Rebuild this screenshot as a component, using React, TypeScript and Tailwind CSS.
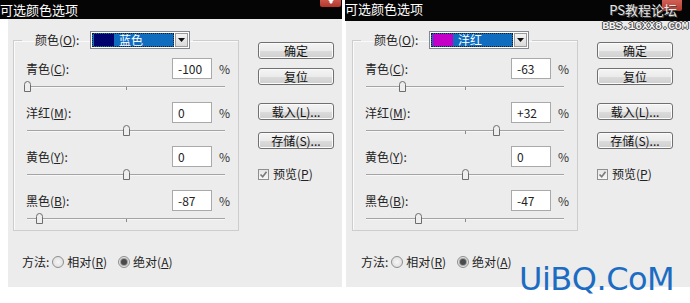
import React from 'react';

const cjk = "font-['Noto_Sans_CJK_SC','Noto_Sans',sans-serif]";

interface RowProps {
  name: string;
  hot: string;
  value: number;
  last?: boolean;
}

function Thumb() {
  return <svg width="9" height="11" viewBox="0 0 9 11">
      <path d="M1.5 10.5 V3.5 Q1.5 0.5 4.5 0.5 Q7.5 0.5 7.5 3.5 V10.5 Z" fill="#eeeeee" stroke="#6d6d6d" />
    </svg>;
}

function SliderRow({ name, hot, value, last }: RowProps) {
  const shown = value > 0 ? `+${value}` : `${value}`;
  return <div className={last ? '' : 'mb-[7px]'}>
      <div className="flex items-center h-[21px]">
        <span className="w-[146px] text-[12px] text-[#222]">
          {name}(<span className="underline">{hot}</span>):
        </span>
        <div className="w-[40px] h-[21px] border border-[#a9a9a9] bg-white pl-[5px] flex items-center text-[12px] text-[#222]">
          {shown}
        </div>
        <span className="ml-[7px] text-[12px] text-[#333]">%</span>
      </div>
      <div className="relative ml-[1px] w-[198px] h-[16px] pt-[7px]">
        <div className="h-px bg-[#a4a4a4]" />
        <div className="h-px bg-[#f7f7f7]" />
        <div className="absolute left-[99px] top-[8px] w-px h-[3px] bg-[#8a8a8a]" />
        <div className="absolute top-[2px] leading-none" style={{ left: (value + 100) / 200 * 198 - 4.5 }}>
          <Thumb />
        </div>
      </div>
    </div>;
}

function Btn({ children, className = '' }: { children: React.ReactNode; className?: string }) {
  return <div className={`w-[76px] h-[17px] rounded-[3px] border border-[#707070] bg-[linear-gradient(#f4f4f4,#ebebeb_50%,#dcdcdc_51%,#cfcfcf)] flex items-center justify-center text-[12px] text-[#111] shadow-[inset_0_0_0_1px_#fbfbfb] ${className}`}>
      {children}
    </div>;
}

function Radio({ checked }: { checked?: boolean }) {
  return <span className="w-[12px] h-[12px] rounded-full border border-[#8e8f8f] bg-[radial-gradient(circle,#f6f6f6,#d8d8d8)] flex items-center justify-center">
      {checked && <span className="w-[6px] h-[6px] rounded-full bg-[#4a4a4a] shadow-[0_0_0_1px_#a0a0a0]" />}
    </span>;
}

interface DialogProps {
  swatch: string;
  colorName: string;
  rows: RowProps[];
  wide?: boolean;
}

function Dialog({ swatch, colorName, rows, wide }: DialogProps) {
  return <div className={`${wide ? 'w-[345px]' : 'w-[342px]'} flex flex-col`}>
      <div className={`${wide ? 'h-[21px] pb-[3px]' : 'h-[19px]'} bg-[#050505] flex items-center text-[13px] text-white`}>
        可选颜色选项
      </div>
      <div className={`${wide ? 'ml-[1px] pl-[6px] h-[266px] pt-[10px]' : 'ml-[8px] pl-[5px] h-[268px] pt-[12px]'} bg-[#ececec] flex items-start`}>
        <div className="flex flex-col">
          <fieldset className="w-[226px] min-w-0 border border-[#cdcdcd] shadow-[inset_1px_1px_0_#fafafa] p-0 m-0">
            <legend className="ml-[8px] pl-[13px] pr-[3px] flex items-center h-[18px]">
              <span className="text-[12px] text-[#222] w-[55px]">
                颜色(<span className="underline">O</span>):
              </span>
              <div className="w-[100px] h-[18px] border border-[#828790] bg-white flex p-[1px]">
                <div className="flex-1 bg-[#0f6cbf] border border-dotted border-[#1c1c1c] flex items-center pl-[1px]">
                  <span className="w-[20px] h-[12px]" style={{ background: swatch }} />
                  <span className="ml-[5px] text-[12px] text-white">{colorName}</span>
                </div>
                <div className="w-[13px] ml-[1px] bg-[linear-gradient(#f3f3f3,#dadada)] border border-[#9a9a9a] flex items-center justify-center">
                  <svg width="7" height="4" viewBox="0 0 7 4"><path d="M0 0 H7 L3.5 4 Z" fill="#111" /></svg>
                </div>
              </div>
            </legend>
            <div className="pl-[12px] pt-[9px] pb-[3px]">
              {rows.map((r, i) => <SliderRow key={r.name} {...r} last={i === rows.length - 1} />)}
            </div>
          </fieldset>
          <div className="mt-[23px] ml-[9px] flex items-center h-[16px] text-[12px] text-[#222]">
            <span>方法:</span>
            <span className="ml-[3px]"><Radio /></span>
            <span className="ml-[3px]">相对(<span className="underline">R</span>)</span>
            <span className="ml-[11px]"><Radio checked /></span>
            <span className="ml-[3px]">绝对(<span className="underline">A</span>)</span>
          </div>
        </div>
        <div className="ml-[19px] mt-[11px] flex flex-col">
          <Btn>确定</Btn>
          <Btn className="mt-[9px]">复位</Btn>
          <Btn className="mt-[18px]">载入(L)...</Btn>
          <Btn className="mt-[12px]">存储(S)...</Btn>
          <div className="mt-[16px] flex items-center text-[12px] text-[#222]">
            <span className="w-[11px] h-[11px] border border-[#8e8f8f] bg-[linear-gradient(#e6e6e6,#f8f8f8)] flex items-center justify-center">
              <svg width="9" height="9" viewBox="0 0 9 9"><path d="M1.5 4.5 L3.7 6.8 L7.5 1.8" fill="none" stroke="#7a7a7a" strokeWidth="1.6" /></svg>
            </span>
            <span className="ml-[4px]">预览(<span className="underline">P</span>)</span>
          </div>
        </div>
      </div>
    </div>;
}

export default function App() {
  return <div className={`relative w-[690px] h-[303px] bg-white overflow-hidden ${cjk}`}>
      <div className="flex gap-[3px]">
        <Dialog swatch="#02046e" colorName="蓝色" rows={[{ name: '青色', hot: 'C', value: -100 }, { name: '洋红', hot: 'M', value: 0 }, { name: '黄色', hot: 'Y', value: 0 }, { name: '黑色', hot: 'B', value: -87 }]} />
        <Dialog wide swatch="#c400c8" colorName="洋红" rows={[{ name: '青色', hot: 'C', value: -63 }, { name: '洋红', hot: 'M', value: 32 }, { name: '黄色', hot: 'Y', value: 0 }, { name: '黑色', hot: 'B', value: -47 }]} />
      </div>

      {/* close buttons, cut off by the crop */}
      <div className="absolute left-[320px] top-0 w-[21px] h-[7px] bg-[linear-gradient(#c9584a,#b5342a)] rounded-b-[2px] flex justify-center overflow-hidden">
        <svg width="10" height="7" viewBox="0 0 10 7"><path d="M1 -3 L6 3 M9 -3 L4 3" stroke="#fff" strokeWidth="2" /></svg>
      </div>
      <div className="absolute left-[662px] top-0 w-[20px] h-[11px] bg-[linear-gradient(#d06055,#b33a2e)] rounded-b-[2px]" />

      {/* forum watermark */}
      <div className="absolute right-[13px] top-[2px] text-[13px] leading-[15px] text-[#e6e6e6] [text-shadow:1px_1px_0_#4a4a4a]">
        PS教程论坛
      </div>
      <div className="absolute right-[2px] top-[20px] font-['Liberation_Mono',monospace] text-[11.5px] leading-[11px] font-bold text-[#f2f2f2] tracking-[-0.3px] [text-shadow:1px_0_0_#444,-1px_0_0_#444,0_1px_0_#444,0_-1px_0_#444]">
        BBS.16XX8.COM
      </div>

      <div className="absolute left-[519px] top-[259px] font-['DejaVu_Sans',sans-serif] text-[32px] leading-[40px] text-[#1c6cc3] tracking-[-0.5px]">
        UiBQ.CoM
      </div>
    </div>;
}
